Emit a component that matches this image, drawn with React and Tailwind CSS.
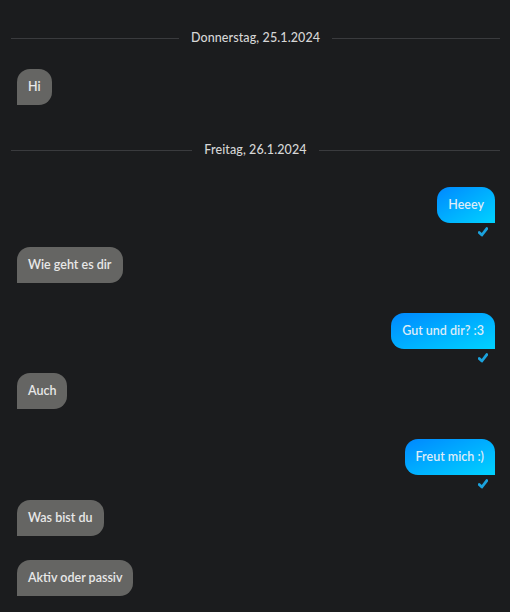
import React from 'react';

const messages = [
  { type: 'date', label: 'Donnerstag, 25.1.2024', space: 'mt-[30px]' },
  { type: 'in', text: 'Hi', space: 'mt-[23px]' },
  { type: 'date', label: 'Freitag, 26.1.2024', space: 'mt-[37px]' },
  { type: 'out', text: 'Heeey', space: 'mt-[29px]' },
  { type: 'in', text: 'Wie geht es dir', space: 'mt-[8px]' },
  { type: 'out', text: 'Gut und dir? :3', space: 'mt-[30px]' },
  { type: 'in', text: 'Auch', space: 'mt-[8px]' },
  { type: 'out', text: 'Freut mich :)', space: 'mt-[30px]' },
  { type: 'in', text: 'Was bist du', space: 'mt-[9px]' },
  { type: 'in', text: 'Aktiv oder passiv', space: 'mt-[24px]' },
];

const CheckMark = () => (
  <svg width="10" height="10" viewBox="0 0 10 10" className="block">
    <path d="M1.2 5.4 L3.9 8 L8.8 1.6" fill="none" stroke="#1ba3de" strokeWidth="2.8" strokeLinecap="round" strokeLinejoin="round" />
  </svg>
);

const DateDivider = ({ label, space }) => (
  <div className={`${space} flex items-center gap-3 pl-[11px] pr-[10px] h-4`}>
    <div className="flex-1 h-px bg-[#3a3b3e]" />
    <span className="text-[12.5px] leading-4 text-[#d6d6d6] font-medium tracking-[0.1px]">{label}</span>
    <div className="flex-1 h-px bg-[#3a3b3e]" />
  </div>
);

const Incoming = ({ text, space }) => (
  <div className={`${space} flex px-[17px]`}>
    <div className="h-9 px-[11px] flex items-center rounded-[13px] rounded-bl-none bg-[#656563] text-[12.5px] font-semibold text-[#e8e8e8]">
      {text}
    </div>
  </div>
);

const Outgoing = ({ text, space }) => (
  <div className={`${space} flex flex-col items-end pr-[15px]`}>
    <div className="h-9 px-[11px] flex items-center rounded-[13px] rounded-br-none bg-gradient-to-br from-[#0088ff] to-[#00d2ff] text-[12.5px] font-semibold text-[#dcecf8]">
      {text}
    </div>
    <div className="h-4 pt-[4px] pr-[7px]">
      <CheckMark />
    </div>
  </div>
);

export default function App() {
  return (
    <div className="w-[510px] h-[612px] overflow-hidden bg-[#1b1c1e] font-['Lato',sans-serif]">
      {messages.map((m, i) => {
        if (m.type === 'date') return <DateDivider key={i} {...m} />;
        if (m.type === 'out') return <Outgoing key={i} {...m} />;
        return <Incoming key={i} {...m} />;
      })}
    </div>
  );
}
